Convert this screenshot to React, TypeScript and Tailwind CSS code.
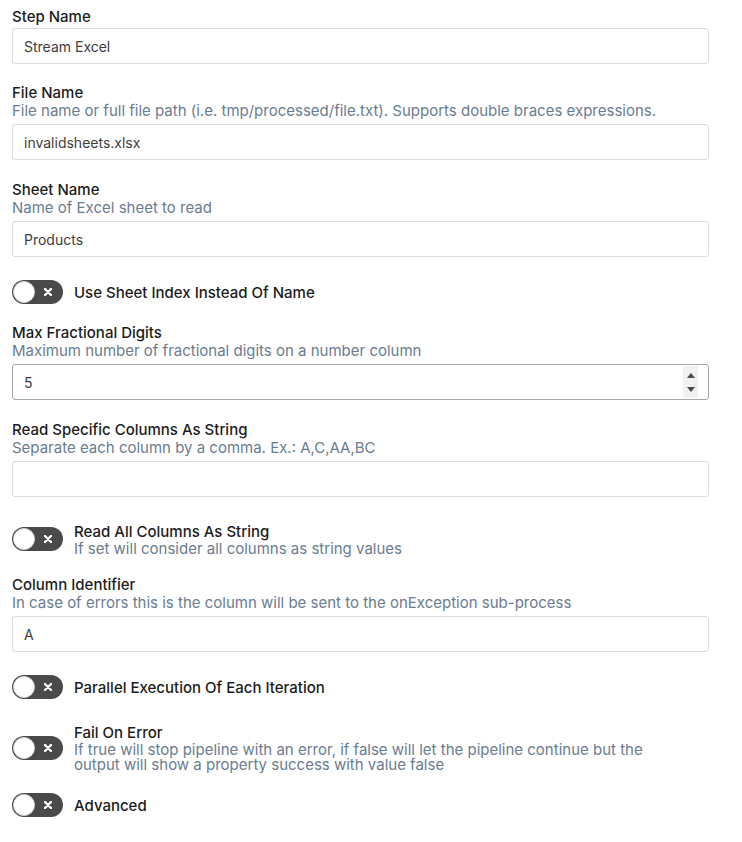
import React from "react";

const labelCls = "pt-[1px] text-[15px] leading-[18px] font-medium text-[#1c1c1c] whitespace-nowrap";
const descCls = "text-[15px] leading-[18px] text-[#6a7c8f] whitespace-nowrap";

function TextInput({ value, className = "mt-[3px]" }: { value: string; className?: string }) {
  return (
    <div
      className={
        "h-[36px] w-full rounded-[3px] border border-[#dadee2] bg-white pl-[11px] flex items-center text-[14px] text-[#3d3d3d] " +
        className
      }
    >
      {value}
    </div>
  );
}

function NumberInput({ value }: { value: string }) {
  return (
    <div className="mt-[3px] h-[36px] w-full rounded-[3px] border border-[#a6a6a6] bg-white pl-[11px] flex items-stretch text-[14px] text-[#3d3d3d]">
      <div className="flex-1 flex items-center">{value}</div>
      <div className="w-[15px] mr-[10px] my-[1px] bg-[#f1f1f1] flex flex-col items-center justify-center gap-[9px]">
        <svg width="8" height="5" viewBox="0 0 8 5">
          <path d="M0 5 L4 0 L8 5 Z" fill="#4b4b4b" />
        </svg>
        <svg width="8" height="5" viewBox="0 0 8 5">
          <path d="M0 0 L4 5 L8 0 Z" fill="#4b4b4b" />
        </svg>
      </div>
    </div>
  );
}

function Field({
  label,
  desc,
  children,
  className = "",
}: {
  label: string;
  desc?: string;
  children: React.ReactNode;
  className?: string;
}) {
  return (
    <div className={"flex flex-col " + className}>
      <div className={labelCls}>{label}</div>
      {desc && <div className={descCls + " mb-[1px]"}>{desc}</div>}
      {children}
    </div>
  );
}

function Toggle() {
  return (
    <div className="relative h-[24px] w-[51px] shrink-0 rounded-full bg-[#4a4a4a]">
      <div className="absolute left-[1px] top-[1px] h-[22px] w-[22px] rounded-full bg-white border border-[#d6d6d6]" />
      <svg className="absolute left-[32px] top-[8px]" width="8" height="8" viewBox="0 0 8 8">
        <path d="M1 1 L7 7 M7 1 L1 7" stroke="#ffffff" strokeWidth="2.4" strokeLinecap="round" />
      </svg>
    </div>
  );
}

function ToggleRow({
  title,
  desc,
  className = "",
}: {
  title: string;
  desc?: React.ReactNode;
  className?: string;
}) {
  return (
    <div className={"flex items-center gap-[11px] " + className}>
      <Toggle />
      <div className="flex flex-col">
        <div className={labelCls}>{title}</div>
        {desc && <div className="text-[15px] leading-[15px] text-[#6a7c8f] whitespace-nowrap">{desc}</div>}
      </div>
    </div>
  );
}

export default function App() {
  return (
    <div className="w-[742px] min-h-[842px] bg-white pl-[12px] pt-[7px] font-['Inter',sans-serif]">
      <div className="w-[697px] flex flex-col">
        <Field label="Step Name">
          <TextInput value="Stream Excel" className="mt-[2px]" />
        </Field>
        <Field
          label="File Name"
          desc="File name or full file path (i.e. tmp/processed/file.txt). Supports double braces expressions."
          className="mt-[19px]"
        >
          <TextInput value="invalidsheets.xlsx" />
        </Field>
        <Field label="Sheet Name" desc="Name of Excel sheet to read" className="mt-[20px]">
          <TextInput value="Products" />
        </Field>
        <ToggleRow title="Use Sheet Index Instead Of Name" className="mt-[23px]" />
        <Field
          label="Max Fractional Digits"
          desc="Maximum number of fractional digits on a number column"
          className="mt-[19px]"
        >
          <NumberInput value="5" />
        </Field>
        <Field
          label="Read Specific Columns As String"
          desc="Separate each column by a comma. Ex.: A,C,AA,BC"
          className="mt-[20px]"
        >
          <TextInput value="" />
        </Field>
        <ToggleRow
          title="Read All Columns As String"
          desc="If set will consider all columns as string values"
          className="mt-[25px]"
        />
        <Field
          label="Column Identifier"
          desc="In case of errors this is the column will be sent to the onException sub-process"
          className="mt-[19px]"
        >
          <TextInput value="A" />
        </Field>
        <ToggleRow title="Parallel Execution Of Each Iteration" className="mt-[23px]" />
        <ToggleRow
          title="Fail On Error"
          className="mt-[24px]"
          desc={
            <>
              If true will stop pipeline with an error, if false will let the pipeline continue but the
              <br />
              output will show a property success with value false
            </>
          }
        />
        <ToggleRow title="Advanced" className="mt-[21px]" />
      </div>
    </div>
  );
}
